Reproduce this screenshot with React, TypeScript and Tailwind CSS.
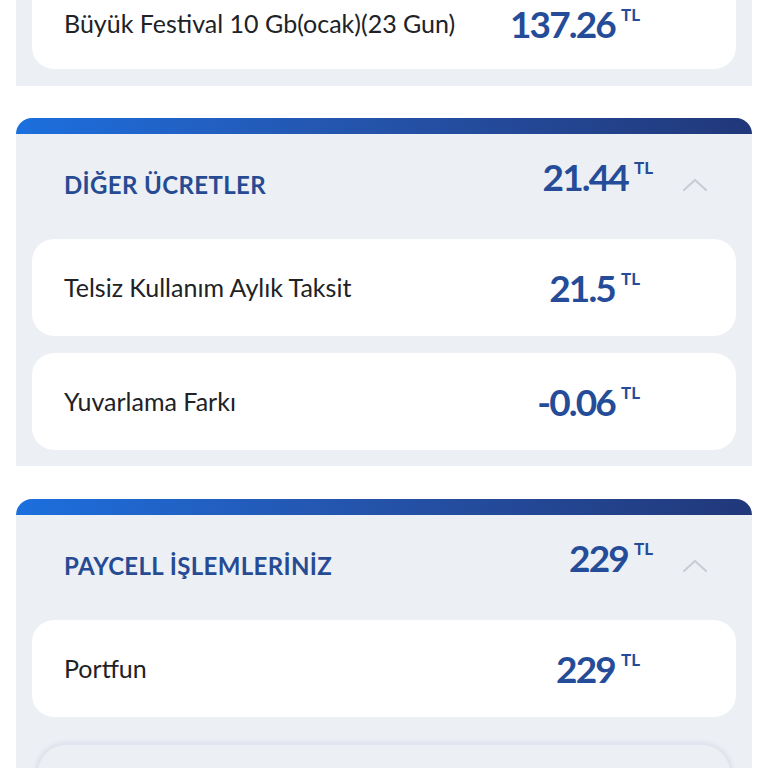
import React from "react";

const Amount = ({ value }: { value: string }) => (
  <div className="flex items-start text-[#254c98]">
    <span className="text-[37px] font-bold leading-none tracking-[-0.05em]">{value}</span>
    <span className="ml-[6px] mt-[1px] text-[17px] font-bold leading-none">TL</span>
  </div>
);

const Chevron = () => (
  <svg width="26" height="16" viewBox="0 0 26 16" fill="none">
    <path d="M2 13 L13 3 L24 13" stroke="#c9cdd3" strokeWidth="2.2" strokeLinecap="round" strokeLinejoin="round" />
  </svg>
);

const Row = ({ label, value }: { label: string; value: string }) => (
  <div className="flex h-[97px] items-center justify-between rounded-[22px] bg-white pl-[32px] pr-[96px]">
    <span className="text-[25px] text-[#202226]">{label}</span>
    <Amount value={value} />
  </div>
);

const Section = ({
  title,
  total,
  children,
}: {
  title: string;
  total: string;
  children: React.ReactNode;
}) => (
  <div className="mx-[16px]">
    <div className="h-[16px] rounded-t-[16px] bg-gradient-to-r from-[#1b6fde] via-[#2452a8] to-[#21387a]" />
    <div className="bg-[#eceff3] px-[16px] pb-[16px]">
      <div className="flex h-[105px] items-center justify-between pb-[4px] pl-[32px] pr-[28px]">
        <span className="text-[24px] font-bold text-[#264b93] tracking-[0.015em]">{title}</span>
        <div className="flex items-center gap-[29px]">
          <div className="-mt-[16px]">
            <Amount value={total} />
          </div>
          <Chevron />
        </div>
      </div>
      {children}
    </div>
  </div>
);

export default function App() {
  return (
    <div
      className="min-h-[768px] w-[768px] overflow-hidden bg-white"
      style={{ fontFamily: "Lato, 'Noto Sans', sans-serif" }}
    >
      <div className="mx-[16px] bg-[#eceff3] px-[16px] pb-[17px]">
        <div className="flex h-[69px] items-center justify-between rounded-b-[22px] bg-white pb-[22px] pl-[32px] pr-[96px]">
          <span className="text-[25px] text-[#202226]">Büyük Festival 10 Gb(ocak)(23 Gun)</span>
          <Amount value="137.26" />
        </div>
      </div>

      <div className="mt-[32px]">
        <Section title="DİĞER ÜCRETLER" total="21.44">
          <div className="flex flex-col gap-[17px]">
            <Row label="Telsiz Kullanım Aylık Taksit" value="21.5" />
            <Row label="Yuvarlama Farkı" value="-0.06" />
          </div>
        </Section>
      </div>

      <div className="mt-[33px]">
        <Section title="PAYCELL İŞLEMLERİNİZ" total="229">
          <Row label="Portfun" value="229" />
          <div className="mx-[4px] mt-[26px] h-[60px] rounded-[30px] border-2 border-[#e1e3ee] shadow-[0_0_4px_rgba(180,185,220,0.4)]" />
        </Section>
      </div>
    </div>
  );
}
